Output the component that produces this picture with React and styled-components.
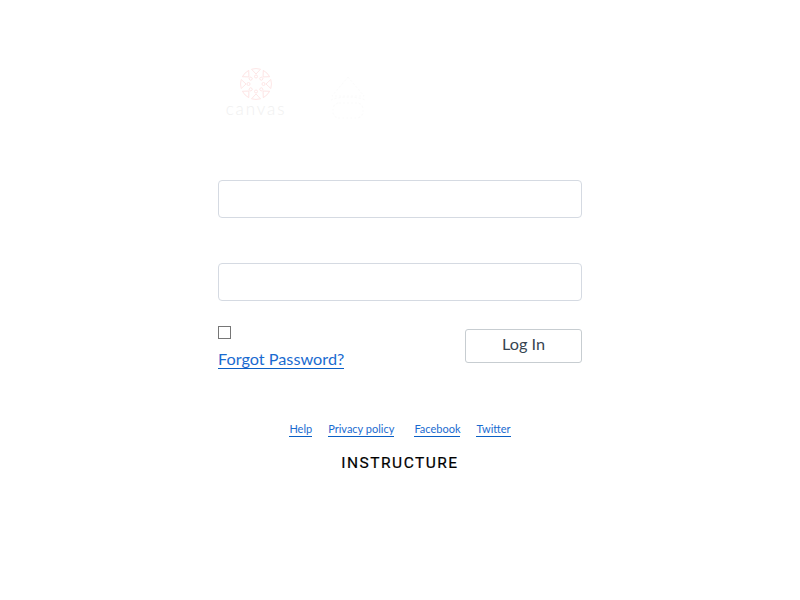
import React from "react";
import styled, { createGlobalStyle } from "styled-components";

const Global = createGlobalStyle`
  html, body { margin: 0; padding: 0; background: #fff; }
  body { font-family: Lato, "Liberation Sans", sans-serif; }
`;
const Page = styled.div`
  width: 364px;
  height: 600px;
  margin: 0 auto;
  display: flex;
  flex-direction: column;
`;
const LogoRow = styled.div`
  height: 180px;
  padding-top: 67px;
  box-sizing: border-box;
  display: flex;
  align-items: flex-start;
  gap: 34px;
`;
const CanvasLogo = styled.div`
  width: 76px;
  display: flex;
  flex-direction: column;
  align-items: center;
`;
const Wordmark = styled.div`
  font-family: Lato, sans-serif;
  font-weight: 300;
  font-size: 17px;
  line-height: 16px;
  letter-spacing: 1.9px;
  color: #f0f0f0;
`;
const FaintSlot = styled.div`
  padding-top: 9px;
  display: flex;
`;
const Field = styled.input`
  display: block;
  width: 100%;
  height: 38px;
  box-sizing: border-box;
  border: 1px solid #d5dae2;
  border-radius: 4px;
  background: #fff;
  padding: 0 12px;
  margin-bottom: ${(p) => p.$gap}px;
  outline: none;
`;
const Actions = styled.div`
  display: flex;
  justify-content: space-between;
  align-items: flex-start;
  margin-top: 25px;
  height: 68px;
`;
const Left = styled.div`
  display: flex;
  flex-direction: column;
  align-items: flex-start;
`;
const Box = styled.span`
  display: block;
  width: 13px;
  height: 13px;
  box-sizing: border-box;
  border: 1px solid #767676;
  margin-bottom: 10px;
`;
const ForgotLink = styled.a`
  font-size: 16.25px;
  line-height: 19px;
  color: #1a6bd0;
  text-decoration: none;
  border-bottom: 1px solid #0b5fc4;
`;
const LoginButton = styled.button`
  width: 117px;
  height: 34px;
  margin-top: 3px;
  box-sizing: border-box;
  background: #fff;
  border: 1px solid #c7cdd1;
  border-radius: 3px;
  font-family: Lato, sans-serif;
  font-size: 16.25px;
  line-height: 20px;
  color: #364551;
  padding: 0 0 5px;
`;
const FooterLinks = styled.nav`
  display: flex;
  justify-content: center;
  margin-top: 28px;
`;
const FooterLink = styled.a`
  font-size: 11px;
  line-height: 14px;
  color: #1a6bd0;
  text-decoration: none;
  border-bottom: 1px solid #0b5fc4;
  margin-left: ${(p) => p.$ml || 0}px;
`;
const Brand = styled.div`
  margin-top: 16px;
  text-align: center;
  font-family: Roboto, sans-serif;
  font-weight: 400;
  font-size: 15.5px;
  line-height: 20px;
  letter-spacing: 1.5px;
  color: #000;
  -webkit-text-stroke: 0.2px #000;
`;

const petal = [0, 45, 90, 135, 180, 225, 270, 315];

const CanvasMark = () => (
  <svg width="34" height="34" viewBox="0 0 34 34" fill="none" stroke="#fde3e3" strokeWidth="0.9">
    {petal.map((a) => (
      <g key={a} transform={`rotate(${a} 17 17)`}>
        <path d="M12.5 2.2a16 16 0 0 1 9 0L17 7z" />
        <circle cx="17" cy="9.5" r="1.5" />
      </g>
    ))}
  </svg>
);

const FaintMark = () => (
  <svg width="40" height="44" viewBox="0 0 40 44" fill="none" stroke="#fbfbfb" strokeWidth="1" strokeDasharray="2 2">
    <path d="M20 1 36 20H4z" />
    <path d="M3 24c9-4 25-4 34 0" />
    <rect x="5" y="27" width="30" height="15" rx="6" />
  </svg>
);

export default function App() {
  return (
    <>
      <Global />
      <Page>
        <LogoRow>
          <CanvasLogo>
            <CanvasMark />
            <Wordmark>canvas</Wordmark>
          </CanvasLogo>
          <FaintSlot>
            <FaintMark />
          </FaintSlot>
        </LogoRow>
        <Field $gap={45} aria-label="Username" />
        <Field $gap={0} type="password" aria-label="Password" />
        <Actions>
          <Left>
            <Box />
            <ForgotLink href="#">Forgot Password?</ForgotLink>
          </Left>
          <LoginButton>Log In</LoginButton>
        </Actions>
        <FooterLinks>
          <FooterLink href="#">Help</FooterLink>
          <FooterLink href="#" $ml={16}>Privacy policy</FooterLink>
          <FooterLink href="#" $ml={20}>Facebook</FooterLink>
          <FooterLink href="#" $ml={16}>Twitter</FooterLink>
        </FooterLinks>
        <Brand>INSTRUCTURE</Brand>
      </Page>
    </>
  );
}
